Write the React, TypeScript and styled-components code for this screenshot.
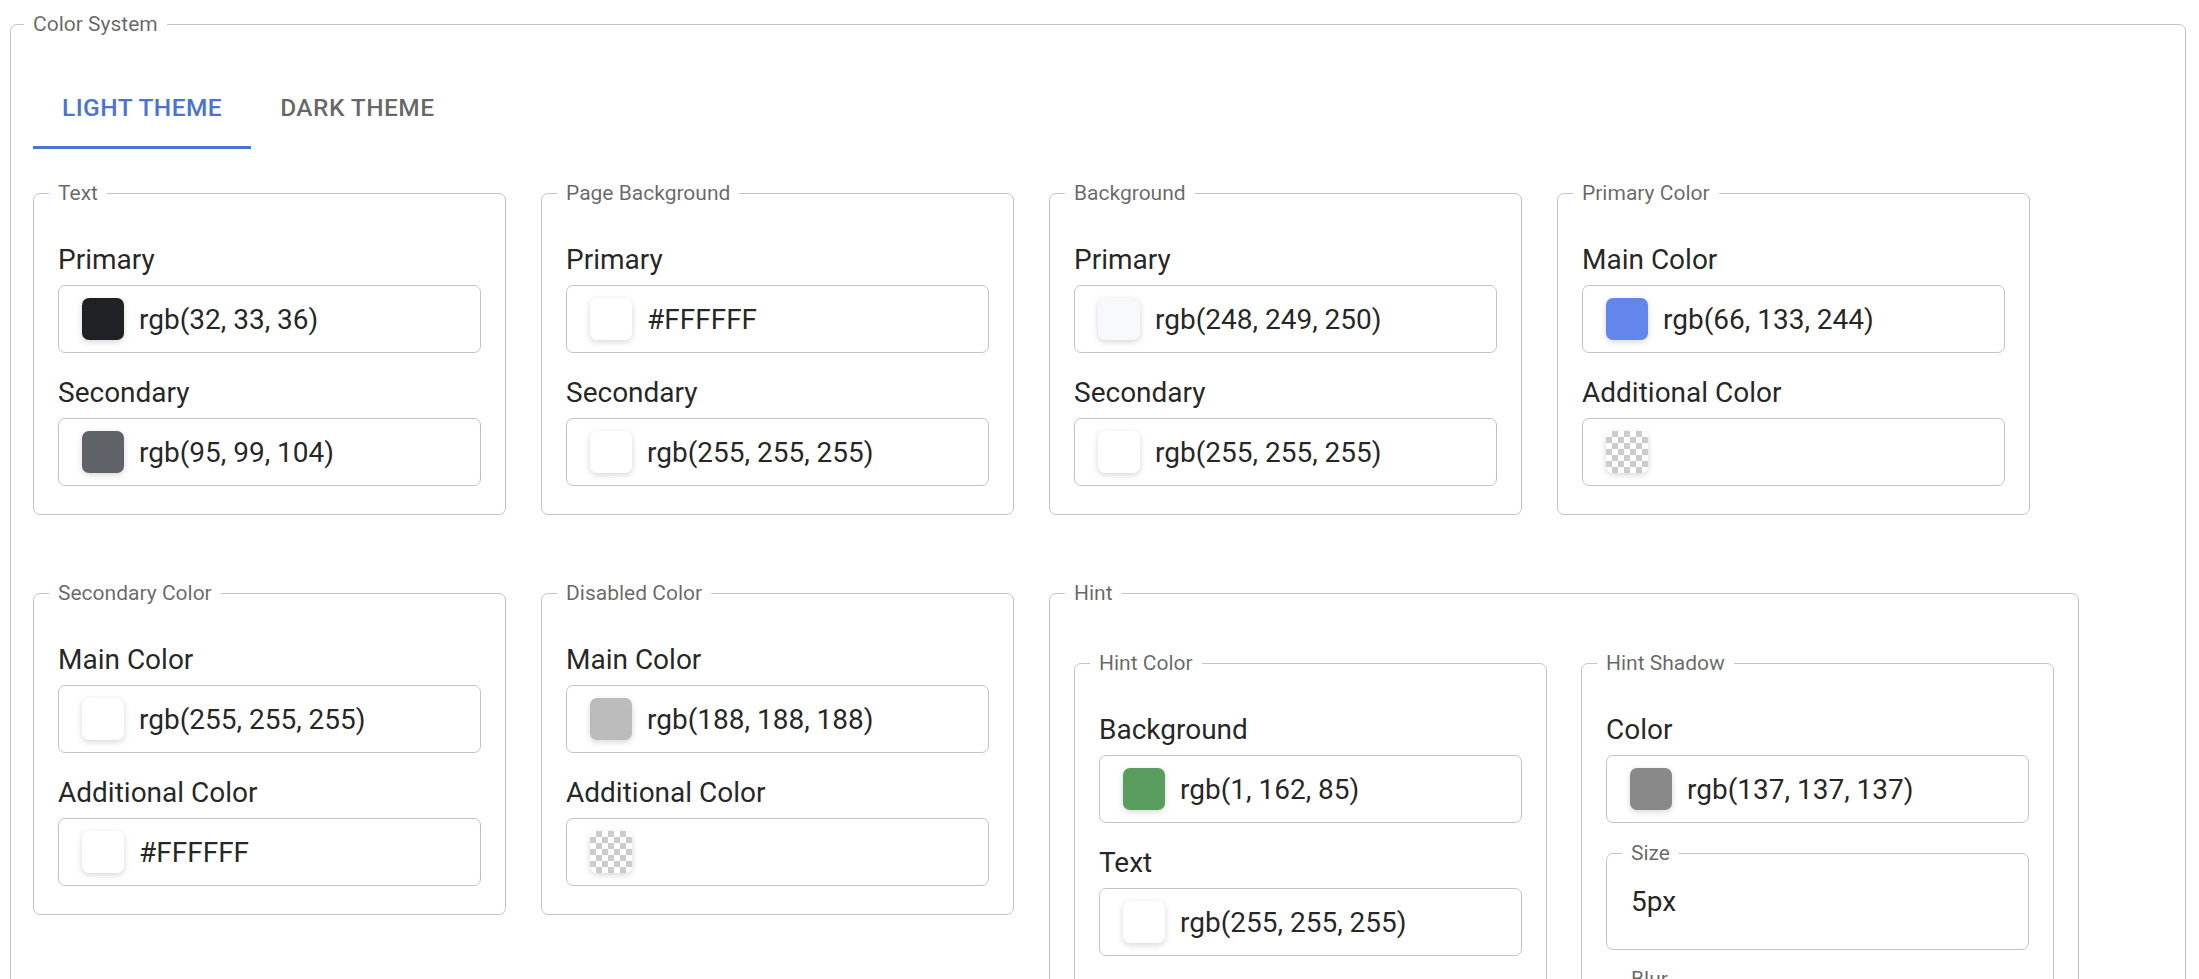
import React, { useState } from "react";
import styled, { createGlobalStyle, css } from "styled-components";

const GlobalStyle = createGlobalStyle`
  html, body {
    margin: 0;
    padding: 0;
    background: #ffffff;
  }
  body {
    font-family: Roboto, "Noto Sans", Arial, sans-serif;
    color: rgba(0, 0, 0, 0.87);
  }
  * { box-sizing: border-box; }
`;

const Page = styled.div`
  padding: 12px 13px 0 10px;
`;

const Frame = styled.fieldset`
  margin: 0;
  min-width: 0;
  border: 1px solid #c4c4c4;
  border-radius: 7px;
  padding: 29px 22px 60px 22px;
`;

const Legend = styled.legend`
  padding: 0 9px;
  margin-left: -9px;
  font-family: Roboto, Arial, sans-serif;
  font-size: 21px;
  line-height: 24px;
  color: rgba(0, 0, 0, 0.6);
`;

const TabList = styled.div`
  display: flex;
  height: 84px;
`;

const Tab = styled.button<{ $active?: boolean }>`
  appearance: none;
  border: 0;
  background: transparent;
  margin: 0;
  padding: 0 29px;
  height: 84px;
  font-family: Roboto, Arial, sans-serif;
  font-size: 24.5px;
  font-weight: 500;
  letter-spacing: 0.45px;
  text-transform: uppercase;
  cursor: pointer;
  color: rgba(0, 0, 0, 0.6);
  ${(p) =>
    p.$active &&
    css`
      color: #4b73d2;
      box-shadow: inset 0 -3px 0 #4b73d2;
    `}
`;

const Panel = styled.div`
  margin-top: 32px;
  display: flex;
  flex-wrap: wrap;
  gap: 66px 35px;
  align-items: flex-start;
`;

const Box = styled.fieldset<{ $top?: number; $auto?: boolean }>`
  margin: 0;
  min-width: 0;
  width: ${(p) => (p.$auto ? "auto" : "473px")};
  border: 1px solid #c4c4c4;
  border-radius: 7px;
  padding: ${(p) => p.$top ?? 38}px 24px 28px 24px;
`;

const InnerRow = styled.div`
  display: flex;
  gap: 34px;
  align-items: stretch;
`;

const Label = styled.div`
  font-size: 28px;
  line-height: 34px;
  color: rgba(0, 0, 0, 0.87);
  margin-bottom: 8px;
`;

const Field = styled.div`
  & + & {
    margin-top: 23px;
  }
`;

const ColorInput = styled.div`
  display: flex;
  align-items: center;
  gap: 15px;
  height: 68px;
  border: 1px solid #c4c4c4;
  border-radius: 7px;
  padding-left: 23px;
  font-size: 28px;
  color: rgba(0, 0, 0, 0.87);
`;

const Swatch = styled.div<{ $color?: string }>`
  flex: none;
  width: 42px;
  height: 42px;
  border-radius: 7px;
  box-shadow: 0 2px 6px rgba(0, 0, 0, 0.16);
  ${(p) =>
    p.$color
      ? css`
          background: ${p.$color};
        `
      : css`
          background: repeating-conic-gradient(#cccccc 0 25%, #ffffff 0 50%) 0 0 / 12px 12px;
        `}
`;

const Outlined = styled.fieldset`
  margin: 18px 0 0 0;
  min-width: 0;
  border: 1px solid #c4c4c4;
  border-radius: 7px;
  padding: 20px 24px 30px 24px;
  & + & {
    margin-top: 17px;
  }
`;

const OutlinedValue = styled.div`
  font-size: 28px;
  line-height: 34px;
  color: rgba(0, 0, 0, 0.87);
`;

type ColorField = { label: string; color?: string; value: string };
type Group = { title: string; fields: ColorField[] };

const groups: Group[] = [
  {
    title: "Text",
    fields: [
      { label: "Primary", color: "#202124", value: "rgb(32, 33, 36)" },
      { label: "Secondary", color: "#5f6368", value: "rgb(95, 99, 104)" },
    ],
  },
  {
    title: "Page Background",
    fields: [
      { label: "Primary", color: "#ffffff", value: "#FFFFFF" },
      { label: "Secondary", color: "#ffffff", value: "rgb(255, 255, 255)" },
    ],
  },
  {
    title: "Background",
    fields: [
      { label: "Primary", color: "#f8f9fa", value: "rgb(248, 249, 250)" },
      { label: "Secondary", color: "#ffffff", value: "rgb(255, 255, 255)" },
    ],
  },
  {
    title: "Primary Color",
    fields: [
      { label: "Main Color", color: "#6286ec", value: "rgb(66, 133, 244)" },
      { label: "Additional Color", value: "" },
    ],
  },
  {
    title: "Secondary Color",
    fields: [
      { label: "Main Color", color: "#ffffff", value: "rgb(255, 255, 255)" },
      { label: "Additional Color", color: "#ffffff", value: "#FFFFFF" },
    ],
  },
  {
    title: "Disabled Color",
    fields: [
      { label: "Main Color", color: "#bcbcbc", value: "rgb(188, 188, 188)" },
      { label: "Additional Color", value: "" },
    ],
  },
];

const ColorFieldView: React.FC<{ f: ColorField }> = ({ f }) => (
  <Field>
    <Label>{f.label}</Label>
    <ColorInput>
      <Swatch $color={f.color} />
      {f.value && <span>{f.value}</span>}
    </ColorInput>
  </Field>
);

const GroupBox: React.FC<{ g: Group }> = ({ g }) => (
  <Box>
    <Legend>{g.title}</Legend>
    {g.fields.map((f) => (
      <ColorFieldView key={f.label} f={f} />
    ))}
  </Box>
);

export default function App() {
  const [tab, setTab] = useState(0);
  return (
    <>
      <GlobalStyle />
      <Page>
        <Frame>
          <Legend>Color System</Legend>
          <TabList>
            <Tab $active={tab === 0} onClick={() => setTab(0)}>
              Light Theme
            </Tab>
            <Tab $active={tab === 1} onClick={() => setTab(1)}>
              Dark Theme
            </Tab>
          </TabList>
          <Panel>
            {groups.map((g) => (
              <GroupBox key={g.title} g={g} />
            ))}
            <Box $auto $top={46}>
              <Legend>Hint</Legend>
              <InnerRow>
                <GroupBox
                  g={{
                    title: "Hint Color",
                    fields: [
                      { label: "Background", color: "#5a9e5f", value: "rgb(1, 162, 85)" },
                      { label: "Text", color: "#ffffff", value: "rgb(255, 255, 255)" },
                    ],
                  }}
                />
                <Box>
                  <Legend>Hint Shadow</Legend>
                  <ColorFieldView f={{ label: "Color", color: "#898989", value: "rgb(137, 137, 137)" }} />
                  <Outlined>
                    <Legend>Size</Legend>
                    <OutlinedValue>5px</OutlinedValue>
                  </Outlined>
                  <Outlined>
                    <Legend>Blur</Legend>
                    <OutlinedValue>10px</OutlinedValue>
                  </Outlined>
                </Box>
              </InnerRow>
            </Box>
          </Panel>
        </Frame>
      </Page>
    </>
  );
}
